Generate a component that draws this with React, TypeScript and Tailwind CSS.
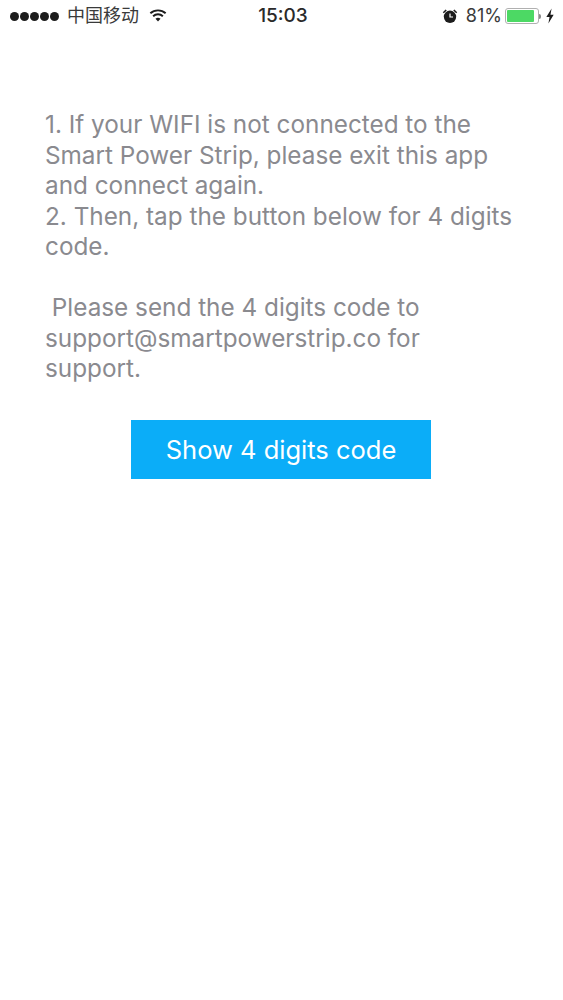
const lines = [
  "1. If your WIFI is not connected to the",
  "Smart Power Strip, please exit this app",
  "and connect again.",
  "2. Then, tap the button below for 4 digits",
  "code.",
  "\u00A0",
  "\u00A0Please send the 4 digits code to",
  "support@smartpowerstrip.co for",
  "support.",
];

function Wifi() {
  return (
    <svg width="18" height="15" viewBox="0 0 20 16" className="ml-[10px] mt-[-2px]">
      <path d="M1.5 5.6C6.2 1.2 13.8 1.2 18.5 5.6" fill="none" stroke="#1c1c1c" strokeWidth="2.2" />
      <path d="M4.6 8.8C7.6 6 12.4 6 15.4 8.8" fill="none" stroke="#1c1c1c" strokeWidth="2.2" />
      <path d="M7.2 11.6C8.8 10.2 11.2 10.2 12.8 11.6L10 14.6Z" fill="#1c1c1c" />
    </svg>
  );
}

function Alarm() {
  return (
    <svg width="16" height="16" viewBox="0 0 16 16">
      <circle cx="8" cy="8.8" r="6.2" fill="#1c1c1c" />
      <path d="M8 5.4V9H11" fill="none" stroke="#fff" strokeWidth="1.2" />
      <path d="M0.8 4.2L3.6 1.4L4.8 2.4L1.8 5.2ZM15.2 4.2L12.4 1.4L11.2 2.4L14.2 5.2Z" fill="#1c1c1c" />
    </svg>
  );
}

function Bolt() {
  return (
    <svg width="10" height="16" viewBox="0 0 8 14">
      <path d="M5.4 0.5L0.8 7.8H3.6L2.6 13.5L7.2 5.8H4.4Z" fill="#1c1c1c" />
    </svg>
  );
}

export default function App() {
  return (
    <div className="h-[1000px] w-[563px] overflow-hidden bg-white font-['Inter','Noto_Sans_CJK_SC',sans-serif]">
      <div className="flex h-[32px] items-center justify-between pl-[10px] pr-[8px] text-[#2a2a2a]">
        <div className="flex w-[200px] items-center">
          <div className="flex gap-[1px]">
            <span className="h-[9px] w-[9px] rounded-full bg-[#1c1c1c]" />
            <span className="h-[9px] w-[9px] rounded-full bg-[#1c1c1c]" />
            <span className="h-[9px] w-[9px] rounded-full bg-[#1c1c1c]" />
            <span className="h-[9px] w-[9px] rounded-full bg-[#1c1c1c]" />
            <span className="h-[9px] w-[9px] rounded-full bg-[#1c1c1c]" />
          </div>
          <span className="ml-[8px] text-[18px] leading-[24px] text-[#3a3a3a]">中国移动</span>
          <Wifi />
        </div>
        <span className="ml-[1px] text-[19px] font-medium leading-[24px] text-[#2a2a2a]">15:03</span>
        <div className="flex w-[200px] items-center justify-end">
          <Alarm />
          <span className="ml-[8px] text-[18px] leading-[24px] text-[#3a3a3a]">81%</span>
          <div className="ml-[3px] flex h-[16px] w-[34px] items-center rounded-[3px] border border-[#b0b0b0] p-[1px]">
            <div className="h-full w-[27px] rounded-[1px] bg-[#4cd964]" />
          </div>
          <div className="h-[5px] w-[2px] rounded-r-full bg-[#8a8a8a]" />
          <div className="ml-[4px] flex">
            <Bolt />
          </div>
        </div>
      </div>
      <div className="px-[45px] pt-[77px] text-[24.3px] leading-[30.5px] text-[#8a8a8f]">
        {lines.map((l, i) => (
          <div key={i} className="whitespace-nowrap">{l}</div>
        ))}
      </div>
      <div className="ml-[131px] mt-[36px]">
        <button className="h-[59px] w-[300px] bg-[#0badf8] pt-[2px] text-[25.5px] text-white">Show 4 digits code</button>
      </div>
    </div>
  );
}
